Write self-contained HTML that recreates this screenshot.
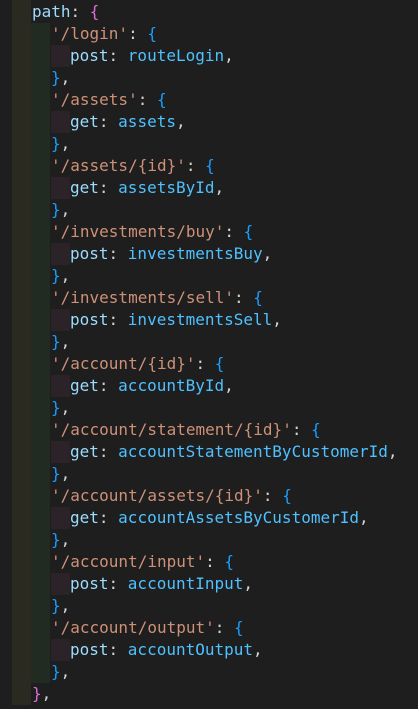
<!DOCTYPE html>
<html><head><meta charset="utf-8"><style>
html,body{margin:0;padding:0;background:#1e1e1e;width:418px;height:709px;overflow:hidden}
.g1{position:absolute;left:12px;top:0;width:19px;height:705px;background:#2a2a20}
.g2{position:absolute;left:31px;top:23px;width:19px;height:660px;background:#222b22}
.code{position:absolute;left:0;top:1px;font-family:"DejaVu Sans Mono","Liberation Mono",monospace;font-size:16px;line-height:22px;color:#d4d4d4}
.l{height:22px;position:relative;white-space:pre}
.a{padding-left:32px}.c{padding-left:51px}.d{padding-left:70px}
.t{position:absolute;left:51px;top:0;width:19px;height:22px;background:#2c2329}
.k{color:#9cdcfe}.s{color:#ce9178}.v{color:#4fc1ff}.p{color:#da70d6}.b{color:#179fff}
</style></head><body>
<div class="g1"></div><div class="g2"></div>
<div class="code">
<div class="l a"><span class="k">path</span>: <span class="p">{</span></div>
<div class="l c"><span class="s">'/login'</span>: <span class="b">{</span></div>
<div class="l d"><span class="t"></span><span class="k">post</span>: <span class="v">routeLogin</span>,</div>
<div class="l c"><span class="b">}</span>,</div>
<div class="l c"><span class="s">'/assets'</span>: <span class="b">{</span></div>
<div class="l d"><span class="t"></span><span class="k">get</span>: <span class="v">assets</span>,</div>
<div class="l c"><span class="b">}</span>,</div>
<div class="l c"><span class="s">'/assets/{id}'</span>: <span class="b">{</span></div>
<div class="l d"><span class="t"></span><span class="k">get</span>: <span class="v">assetsById</span>,</div>
<div class="l c"><span class="b">}</span>,</div>
<div class="l c"><span class="s">'/investments/buy'</span>: <span class="b">{</span></div>
<div class="l d"><span class="t"></span><span class="k">post</span>: <span class="v">investmentsBuy</span>,</div>
<div class="l c"><span class="b">}</span>,</div>
<div class="l c"><span class="s">'/investments/sell'</span>: <span class="b">{</span></div>
<div class="l d"><span class="t"></span><span class="k">post</span>: <span class="v">investmentsSell</span>,</div>
<div class="l c"><span class="b">}</span>,</div>
<div class="l c"><span class="s">'/account/{id}'</span>: <span class="b">{</span></div>
<div class="l d"><span class="t"></span><span class="k">get</span>: <span class="v">accountById</span>,</div>
<div class="l c"><span class="b">}</span>,</div>
<div class="l c"><span class="s">'/account/statement/{id}'</span>: <span class="b">{</span></div>
<div class="l d"><span class="t"></span><span class="k">get</span>: <span class="v">accountStatementByCustomerId</span>,</div>
<div class="l c"><span class="b">}</span>,</div>
<div class="l c"><span class="s">'/account/assets/{id}'</span>: <span class="b">{</span></div>
<div class="l d"><span class="t"></span><span class="k">get</span>: <span class="v">accountAssetsByCustomerId</span>,</div>
<div class="l c"><span class="b">}</span>,</div>
<div class="l c"><span class="s">'/account/input'</span>: <span class="b">{</span></div>
<div class="l d"><span class="t"></span><span class="k">post</span>: <span class="v">accountInput</span>,</div>
<div class="l c"><span class="b">}</span>,</div>
<div class="l c"><span class="s">'/account/output'</span>: <span class="b">{</span></div>
<div class="l d"><span class="t"></span><span class="k">post</span>: <span class="v">accountOutput</span>,</div>
<div class="l c"><span class="b">}</span>,</div>
<div class="l a"><span class="p">}</span>,</div>
</div>
</body></html>
